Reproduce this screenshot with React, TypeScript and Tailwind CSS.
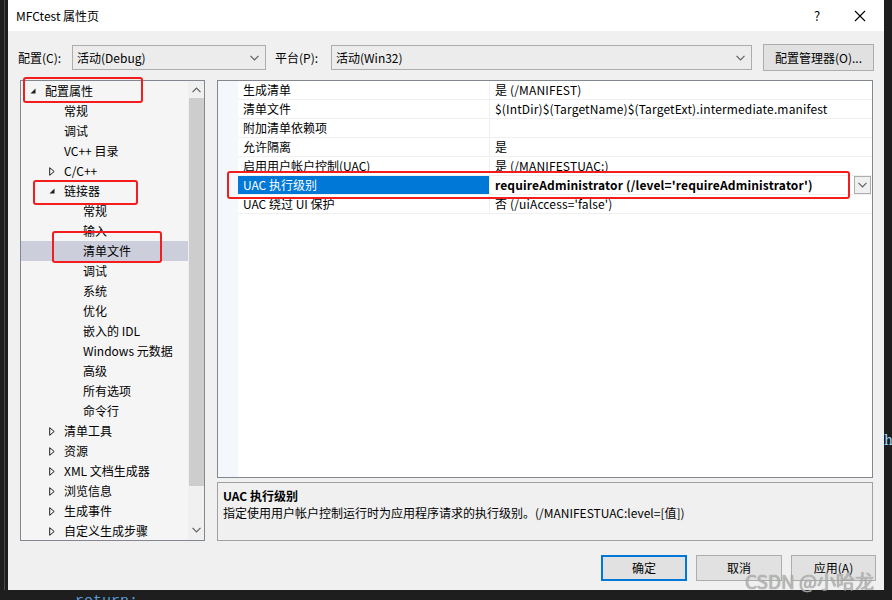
import React from 'react';

const FONT = { fontFamily: '"Segoe UI", "Noto Sans CJK SC", "Noto Sans", sans-serif' };

type TreeItem = { label: string; level: number; state?: 'open' | 'closed'; selected?: boolean };

const tree: TreeItem[] = [
  { label: '配置属性', level: 0, state: 'open' },
  { label: '常规', level: 1 },
  { label: '调试', level: 1 },
  { label: 'VC++ 目录', level: 1 },
  { label: 'C/C++', level: 1, state: 'closed' },
  { label: '链接器', level: 1, state: 'open' },
  { label: '常规', level: 2 },
  { label: '输入', level: 2 },
  { label: '清单文件', level: 2, selected: true },
  { label: '调试', level: 2 },
  { label: '系统', level: 2 },
  { label: '优化', level: 2 },
  { label: '嵌入的 IDL', level: 2 },
  { label: 'Windows 元数据', level: 2 },
  { label: '高级', level: 2 },
  { label: '所有选项', level: 2 },
  { label: '命令行', level: 2 },
  { label: '清单工具', level: 1, state: 'closed' },
  { label: '资源', level: 1, state: 'closed' },
  { label: 'XML 文档生成器', level: 1, state: 'closed' },
  { label: '浏览信息', level: 1, state: 'closed' },
  { label: '生成事件', level: 1, state: 'closed' },
  { label: '自定义生成步骤', level: 1, state: 'closed' },
];

const props: { name: string; value: string; selected?: boolean }[] = [
  { name: '生成清单', value: '是 (/MANIFEST)' },
  { name: '清单文件', value: '$(IntDir)$(TargetName)$(TargetExt).intermediate.manifest' },
  { name: '附加清单依赖项', value: '' },
  { name: '允许隔离', value: '是' },
  { name: '启用用户帐户控制(UAC)', value: '是 (/MANIFESTUAC:)' },
  { name: 'UAC 执行级别', value: "requireAdministrator (/level='requireAdministrator')", selected: true },
  { name: 'UAC 绕过 UI 保护', value: "否 (/uiAccess='false')" },
];

function Chevron({ up = false }: { up?: boolean }) {
  return (
    <svg width="9" height="6" viewBox="0 0 9 6" className={up ? 'rotate-180' : ''}>
      <path d="M0.5 0.8 L4.5 4.8 L8.5 0.8" fill="none" stroke="#606060" strokeWidth="1.2" />
    </svg>
  );
}

function Expander({ state }: { state?: 'open' | 'closed' }) {
  if (state === 'open')
    return (
      <svg width="6" height="6" viewBox="0 0 6 6">
        <path d="M5.5 0.5 L5.5 5.5 L0.5 5.5 Z" fill="#1e1e1e" />
      </svg>
    );
  if (state === 'closed')
    return (
      <svg width="6" height="9" viewBox="0 0 6 9">
        <path d="M0.7 0.7 L5.2 4.5 L0.7 8.3 Z" fill="none" stroke="#1e1e1e" strokeWidth="1" />
      </svg>
    );
  return null;
}

function Select({ value, width }: { value: string; width: string }) {
  return (
    <div className={`${width} h-[25px] border border-[#adadad] bg-[#ececec] flex items-center justify-between pl-[4px] pr-[6px] text-[12px] text-black`}>
      <span>{value}</span>
      <Chevron />
    </div>
  );
}

export default function App() {
  return (
    <div className="w-[892px] h-[600px] bg-[#1e1e1e] flex flex-col overflow-hidden relative" style={FONT}>
      <div className="flex h-[590px] shrink-0">
        {/* editor gutter behind the dialog */}
        <div className="w-[8px] flex justify-center">
          <div className="w-px h-full bg-[#4a4a4a]" />
        </div>

        <div className="w-[876px] flex flex-col bg-[#f0f0f0]">
          {/* title bar */}
          <div className="h-[31px] bg-white flex items-center pl-[8px] text-[12px] text-black">
            <span className="flex-1">MFCtest 属性页</span>
            <span className="w-[20px] text-center text-[13px] mr-[27px]">?</span>
            <svg width="12" height="12" viewBox="0 0 12 12" className="mr-[18px]">
              <path d="M1 1 L11 11 M11 1 L1 11" stroke="#000" strokeWidth="1.1" />
            </svg>
          </div>

          {/* configuration row */}
          <div className="flex items-center h-[27px] mt-[13px] pl-[10px] text-[12px] text-black">
            <span className="w-[54px]">配置(C):</span>
            <Select value="活动(Debug)" width="w-[194px]" />
            <span className="ml-[9px] w-[56px]">平台(P):</span>
            <Select value="活动(Win32)" width="w-[421px]" />
            <div className="ml-[11px] w-[111px] h-[27px] border border-[#adadad] bg-[#e1e1e1] flex items-center justify-center">
              配置管理器(O)...
            </div>
          </div>

          {/* main area */}
          <div className="flex mt-[9px] h-[461px] pl-[12px]">
            {/* tree */}
            <div className="w-[185px] h-[461px] border border-[#828790] bg-[#f5f5f5] flex overflow-hidden">
              <div className="flex-1 flex flex-col">
                {tree.map((t, i) => (
                  <div
                    key={i}
                    className={`h-[20px] shrink-0 flex items-center text-[12px] text-black ${t.selected ? 'bg-[#cccedb]' : ''}`}
                  >
                    <div style={{ width: 9 + t.level * 19 }} className="shrink-0" />
                    <div className="w-[15px] shrink-0 flex items-center">
                      <Expander state={t.state} />
                    </div>
                    <span className="whitespace-nowrap">{t.label}</span>
                  </div>
                ))}
              </div>
              <div className="w-[16px] bg-[#f0f0f0] flex flex-col items-center">
                <div className="h-[17px] flex items-center justify-center">
                  <Chevron up />
                </div>
                <div className="w-[15px] h-[388px] bg-[#cdcdcd]" />
                <div className="flex-1" />
                <div className="h-[20px] flex items-center justify-center">
                  <Chevron />
                </div>
              </div>
            </div>

            {/* right pane */}
            <div className="ml-[12px] w-[656px] flex flex-col">
              <div className="h-[398px] border border-[#828790] bg-white flex">
                <div className="w-[20px] bg-[#f4f8fc]" />
                <div className="flex-1 flex flex-col">
                  {props.map((p, i) => (
                    <div key={i} className="h-[19px] flex border-b border-[#f0f0f0] text-[12px]">
                      <div
                        className={`w-[252px] pl-[5px] flex items-center whitespace-nowrap border-r border-[#f0f0f0] ${
                          p.selected ? 'bg-[#0078d7] text-white' : 'text-black'
                        }`}
                      >
                        {p.name}
                      </div>
                      <div className={`flex-1 pl-[5px] flex items-center whitespace-nowrap text-black tracking-[0.15px] ${p.selected ? 'font-bold' : ''}`}>
                        <span className="flex-1">{p.value}</span>
                        {p.selected && (
                          <div className="w-[17px] h-[18px] border border-[#adadad] bg-[#f0f0f0] flex items-center justify-center mr-[1px]">
                            <Chevron />
                          </div>
                        )}
                      </div>
                    </div>
                  ))}
                </div>
              </div>
              <div className="mt-[4px] h-[59px] border border-[#a0a0a0] bg-[#f0f0f0] px-[5px] pt-[4px] text-[12px] text-black">
                <div className="font-bold leading-[17px]">UAC 执行级别</div>
                <div className="leading-[17px]">指定使用用户帐户控制运行时为应用程序请求的执行级别。(/MANIFESTUAC:level=[值])</div>
              </div>
            </div>
          </div>

          {/* buttons */}
          <div className="flex justify-end gap-[9px] mt-[14px] pr-[8px] text-[12px] text-black">
            <div className="w-[86px] h-[26px] border-2 border-[#0078d7] bg-[#e1e1e1] flex items-center justify-center">确定</div>
            <div className="w-[86px] h-[26px] border border-[#adadad] bg-[#e1e1e1] flex items-center justify-center">取消</div>
            <div className="w-[85px] h-[26px] border border-[#adadad] bg-[#e1e1e1] flex items-center justify-center">应用(A)</div>
          </div>
        </div>

        <div className="w-[8px] relative">
          <span className="absolute left-0 top-[430px] text-[14px] text-[#9cdcfe]" style={{ fontFamily: '"DejaVu Serif", serif' }}>h</span>
        </div>
      </div>

      {/* code peeking under the dialog */}
      <div className="h-[10px] overflow-hidden pl-[75px] pt-[4px]">
        <span className="block text-[15px] leading-[15px] text-[#569cd6]" style={{ fontFamily: '"Liberation Mono", monospace' }}>
          return;
        </span>
      </div>

      {/* red annotation frames */}
      <div className="absolute left-[23px] top-[77px] w-[120px] h-[26px] border-[2.5px] border-[#f41c1c] rounded-[3px]" />
      <div className="absolute left-[33px] top-[180px] w-[105px] h-[25px] border-[2.5px] border-[#f41c1c] rounded-[3px]" />
      <div className="absolute left-[52px] top-[231px] w-[110px] h-[32px] border-[2.5px] border-[#f41c1c] rounded-[3px]" />
      <div className="absolute left-[227px] top-[171px] w-[623px] h-[28px] border-[2.5px] border-[#f41c1c] rounded-[3px]" />

      {/* watermark */}
      <div className="absolute left-[745px] top-[567px] text-[19px] text-[#b4b4b4] opacity-90 whitespace-nowrap" style={{ textShadow: '0 0 1px #707070' }}>
        CSDN @小哈龙
      </div>
    </div>
  );
}
